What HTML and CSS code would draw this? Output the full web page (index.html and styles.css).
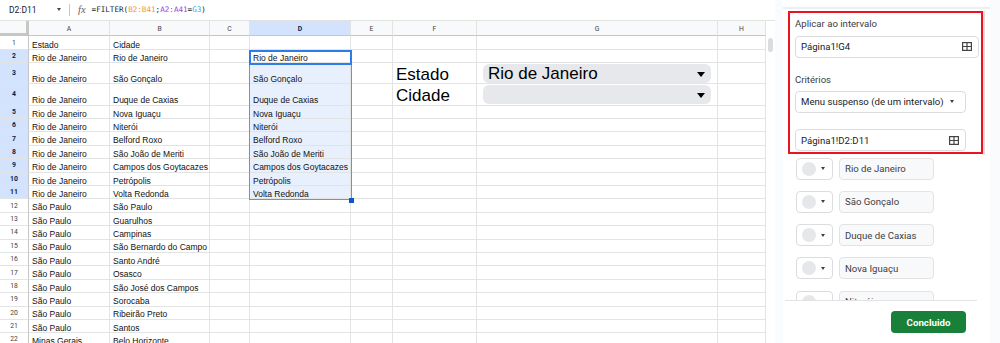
FILE: index.html
```html
<!DOCTYPE html>
<html lang="pt">
<head>
<meta charset="utf-8">
<title>Planilha</title>
<link rel="stylesheet" href="styles.css">
</head>
<body>
<div class="app">
  <div class="sheet">
    <div class="fbar">
      <span class="namebox">D2:D11</span>
      <span class="nb-caret"></span>
      <span class="fsep"></span>
      <span class="fx">fx</span>
      <span class="formula">=FILTER(<span class="r1">B2:B41</span>;<span class="r2">A2:A41</span>=<span class="r3">G3</span>)</span>
    </div>
    <div class="gridarea">
      <div class="grid">
        <div class="row hdr"><div class="corner"></div><div class="h">A</div><div class="h">B</div><div class="h">C</div><div class="h sel">D</div><div class="h">E</div><div class="h">F</div><div class="h">G</div><div class="h">H</div></div>
        <div class="row h14"><div class="rn">1</div><div class="c">Estado</div><div class="c">Cidade</div><div class="c"></div><div class="c"></div><div class="c"></div><div class="c"></div><div class="c"></div><div class="c"></div></div>
        <div class="row h13"><div class="rn sel">2</div><div class="c">Rio de Janeiro</div><div class="c">Rio de Janeiro</div><div class="c"></div><div class="c">Rio de Janeiro</div><div class="c"></div><div class="c"></div><div class="c"></div><div class="c"></div></div>
        <div class="row h21"><div class="rn sel">3</div><div class="c">Rio de Janeiro</div><div class="c">São Gonçalo</div><div class="c"></div><div class="c rg">São Gonçalo</div><div class="c"></div><div class="c big">Estado</div><div class="c gcell"><div class="chip"><span>Rio de Janeiro</span><span class="tri"></span></div></div><div class="c"></div></div>
        <div class="row h21b"><div class="rn sel">4</div><div class="c">Rio de Janeiro</div><div class="c">Duque de Caxias</div><div class="c"></div><div class="c rg">Duque de Caxias</div><div class="c"></div><div class="c big">Cidade</div><div class="c gcell"><div class="chip"><span></span><span class="tri"></span></div></div><div class="c"></div></div>
        <div class="row"><div class="rn sel">5</div><div class="c">Rio de Janeiro</div><div class="c">Nova Iguaçu</div><div class="c"></div><div class="c rg">Nova Iguaçu</div><div class="c"></div><div class="c"></div><div class="c"></div><div class="c"></div></div>
        <div class="row"><div class="rn sel">6</div><div class="c">Rio de Janeiro</div><div class="c">Niterói</div><div class="c"></div><div class="c rg">Niterói</div><div class="c"></div><div class="c"></div><div class="c"></div><div class="c"></div></div>
        <div class="row"><div class="rn sel">7</div><div class="c">Rio de Janeiro</div><div class="c">Belford Roxo</div><div class="c"></div><div class="c rg">Belford Roxo</div><div class="c"></div><div class="c"></div><div class="c"></div><div class="c"></div></div>
        <div class="row"><div class="rn sel">8</div><div class="c">Rio de Janeiro</div><div class="c">São João de Meriti</div><div class="c"></div><div class="c rg">São João de Meriti</div><div class="c"></div><div class="c"></div><div class="c"></div><div class="c"></div></div>
        <div class="row"><div class="rn sel">9</div><div class="c">Rio de Janeiro</div><div class="c">Campos dos Goytacazes</div><div class="c"></div><div class="c rg">Campos dos Goytacazes</div><div class="c"></div><div class="c"></div><div class="c"></div><div class="c"></div></div>
        <div class="row"><div class="rn sel">10</div><div class="c">Rio de Janeiro</div><div class="c">Petrópolis</div><div class="c"></div><div class="c rg">Petrópolis</div><div class="c"></div><div class="c"></div><div class="c"></div><div class="c"></div></div>
        <div class="row"><div class="rn sel">11</div><div class="c">Rio de Janeiro</div><div class="c">Volta Redonda</div><div class="c"></div><div class="c rg">Volta Redonda</div><div class="c"></div><div class="c"></div><div class="c"></div><div class="c"></div></div>
        <div class="row"><div class="rn">12</div><div class="c">São Paulo</div><div class="c">São Paulo</div><div class="c"></div><div class="c"></div><div class="c"></div><div class="c"></div><div class="c"></div><div class="c"></div></div>
        <div class="row"><div class="rn">13</div><div class="c">São Paulo</div><div class="c">Guarulhos</div><div class="c"></div><div class="c"></div><div class="c"></div><div class="c"></div><div class="c"></div><div class="c"></div></div>
        <div class="row"><div class="rn">14</div><div class="c">São Paulo</div><div class="c">Campinas</div><div class="c"></div><div class="c"></div><div class="c"></div><div class="c"></div><div class="c"></div><div class="c"></div></div>
        <div class="row"><div class="rn">15</div><div class="c">São Paulo</div><div class="c">São Bernardo do Campo</div><div class="c"></div><div class="c"></div><div class="c"></div><div class="c"></div><div class="c"></div><div class="c"></div></div>
        <div class="row"><div class="rn">16</div><div class="c">São Paulo</div><div class="c">Santo André</div><div class="c"></div><div class="c"></div><div class="c"></div><div class="c"></div><div class="c"></div><div class="c"></div></div>
        <div class="row"><div class="rn">17</div><div class="c">São Paulo</div><div class="c">Osasco</div><div class="c"></div><div class="c"></div><div class="c"></div><div class="c"></div><div class="c"></div><div class="c"></div></div>
        <div class="row"><div class="rn">18</div><div class="c">São Paulo</div><div class="c">São José dos Campos</div><div class="c"></div><div class="c"></div><div class="c"></div><div class="c"></div><div class="c"></div><div class="c"></div></div>
        <div class="row"><div class="rn">19</div><div class="c">São Paulo</div><div class="c">Sorocaba</div><div class="c"></div><div class="c"></div><div class="c"></div><div class="c"></div><div class="c"></div><div class="c"></div></div>
        <div class="row"><div class="rn">20</div><div class="c">São Paulo</div><div class="c">Ribeirão Preto</div><div class="c"></div><div class="c"></div><div class="c"></div><div class="c"></div><div class="c"></div><div class="c"></div></div>
        <div class="row"><div class="rn">21</div><div class="c">São Paulo</div><div class="c">Santos</div><div class="c"></div><div class="c"></div><div class="c"></div><div class="c"></div><div class="c"></div><div class="c"></div></div>
        <div class="row"><div class="rn">22</div><div class="c">Minas Gerais</div><div class="c">Belo Horizonte</div><div class="c"></div><div class="c"></div><div class="c"></div><div class="c"></div><div class="c"></div><div class="c"></div></div>
        <div class="range"></div>
        <div class="active"></div>
        <div class="handle"></div>
      </div>
      <div class="vscroll"><div class="thumb"></div></div>
    </div>
  </div>

  <div class="side">
    <div class="card">
      <div class="card-top"></div>
      <div class="card-body">
        <div class="content">
          <div class="redbox">
            <div class="lbl">Aplicar ao intervalo</div>
            <div class="field f1"><span>Página1!G4</span>
              <svg class="gridicon" width="10" height="9" viewBox="0 0 10 9"><rect x="0.6" y="0.6" width="8.8" height="7.8" fill="none" stroke="#444" stroke-width="1.2"/><path d="M0.6 4.5H9.4M5 0.6V8.4" stroke="#444" stroke-width="1.2" fill="none"/></svg>
            </div>
            <div class="lbl lbl2">Critérios</div>
            <div class="field fsel"><span>Menu suspenso (de um intervalo)</span><span class="caret"></span></div>
            <div class="field f3"><span>Página1!D2:D11</span>
              <svg class="gridicon" width="10" height="9" viewBox="0 0 10 9"><rect x="0.6" y="0.6" width="8.8" height="7.8" fill="none" stroke="#444" stroke-width="1.2"/><path d="M0.6 4.5H9.4M5 0.6V8.4" stroke="#444" stroke-width="1.2" fill="none"/></svg>
            </div>
          </div>
          <div class="items">
            <div class="item"><div class="colorbtn"><span class="dot"></span><span class="caret"></span></div><div class="txt">Rio de Janeiro</div></div>
            <div class="item"><div class="colorbtn"><span class="dot"></span><span class="caret"></span></div><div class="txt">São Gonçalo</div></div>
            <div class="item"><div class="colorbtn"><span class="dot"></span><span class="caret"></span></div><div class="txt">Duque de Caxias</div></div>
            <div class="item"><div class="colorbtn"><span class="dot"></span><span class="caret"></span></div><div class="txt">Nova Iguaçu</div></div>
            <div class="item"><div class="colorbtn"><span class="dot"></span><span class="caret"></span></div><div class="txt">Niterói</div></div>
          </div>
        </div>
        <div class="pscroll"><div class="pthumb"></div></div>
      </div>
      <div class="foot"><div class="done">Concluido</div></div>
    </div>
  </div>
</div>
</body>
</html>
```

FILE: styles.css
```css
* { box-sizing: border-box; }
html, body { margin: 0; padding: 0; }
body {
  width: 1000px;
  height: 343px;
  overflow: hidden;
  background: #fff;
  font-family: "Liberation Sans", Arial, sans-serif;
}
.app { display: flex; height: 343px; }

/* ---------- sheet ---------- */
.sheet { width: 775px; flex: none; display: flex; flex-direction: column; }
.fbar {
  height: 21px;
  flex: none;
  border-bottom: 1px solid #e1e3e1;
  display: flex;
  align-items: center;
  font-family: Roboto, "Liberation Sans", sans-serif;
  color: #202124;
  padding-bottom: 1px;
}
.namebox { font-size: 8.5px; margin-left: 9px; width: 48px; }
.nb-caret {
  width: 0; height: 0;
  border-left: 2.5px solid transparent;
  border-right: 2.5px solid transparent;
  border-top: 3px solid #444;
}
.fsep { width: 1px; height: 12px; background: #c7c7c7; margin-left: 8px; }
.fx {
  font-family: "Liberation Serif", serif;
  font-style: italic;
  font-size: 10.5px;
  color: #5f6368;
  margin-left: 8px;
}
.formula {
  font-family: "DejaVu Sans Mono", "Liberation Mono", monospace;
  font-size: 7.6px;
  margin-left: 6px;
  color: #202124;
}
.r1 { color: #f09a2a; }
.r2 { color: #a244dc; }
.r3 { color: #34ace0; }

.gridarea { flex: 1; display: flex; overflow: hidden; min-height: 0; }
.grid { width: 766px; flex: none; position: relative; }
.row {
  display: grid;
  grid-template-columns: 29px 81px 100px 40px 101px 42px 84px 241px 48px;
  height: 13.4px;
}
.row > div { border-right: 1px solid #e2e3e3; border-bottom: 1px solid #e2e3e3; }
.row.hdr { height: 15px; background: #f8f9fa; }
.row.h14 { height: 14px; }
.row.h13 { height: 13.33px; }
.row.h21 { height: 21px; }
.row.h21b { height: 21.33px; }

.hdr > div { border-bottom-color: #c4c7c5; }
.corner { border-right: 3px solid #c4c7c5 !important; border-bottom: 3px solid #c4c7c5 !important; }
.h {
  display: flex; align-items: center; justify-content: center;
  font-family: Roboto, sans-serif; font-size: 6.8px; color: #444;
  padding-top: 1px;
}
.h.sel { background: #d3e3fd; font-weight: 700; color: #041e49; }

.rn {
  display: flex; align-items: center; justify-content: center;
  font-family: Roboto, sans-serif; font-size: 6.8px; color: #444;
  background: #fff;
  border-right-color: #c4c7c5 !important;
}
.rn.sel { background: #d3e3fd; font-weight: 700; color: #041e49; }

.c {
  display: flex;
  align-items: flex-end;
  padding: 0 3px 0;
  font-size: 8.5px;
  line-height: 8.5px;
  white-space: nowrap;
  color: #111;
}
.c.rg { background: #e8f0fe; }
.c.big { font-size: 17px; line-height: 17px; padding-bottom: 0.8px; color: #000; }
.c.gcell { padding: 0.7px 6px 0.3px; align-items: stretch; }
.chip {
  flex: 1;
  background: #e6e8eb;
  border-radius: 6px;
  display: flex;
  align-items: center;
  justify-content: space-between;
  padding: 0 6px 0 5px;
  font-size: 17px;
  line-height: 19px;
  color: #000;
}
.tri {
  width: 0; height: 0;
  border-left: 4.5px solid transparent;
  border-right: 4.5px solid transparent;
  border-top: 5px solid #000;
  margin-top: 1px;
}

.range {
  position: absolute;
  left: 249px; top: 28.5px;
  width: 103px; height: 150.5px;
  border: 1.5px solid #5c95f1;
  pointer-events: none;
}
.active {
  position: absolute;
  left: 249px; top: 28.5px;
  width: 103px; height: 15px;
  border: 2px solid #2f7be9;
}
.handle {
  position: absolute;
  left: 349px; top: 176.5px;
  width: 5px; height: 5px;
  background: #0b57d0;
}
.vscroll { width: 9px; flex: none; background: #fff; padding: 17px 0 0 2px; }
.thumb { width: 5px; height: 14px; background: #dadce0; border-radius: 3px; }

/* ---------- side panel ---------- */
.side { flex: 1; background: #f9fbfd; padding: 0 10px 0 8px; font-family: Roboto, "Liberation Sans", sans-serif; }
.card { height: 343px; background: #fff; display: flex; flex-direction: column; }
.card-top { height: 9px; flex: none; border-bottom: 2px solid #eceef1; }
.card-body { flex: 1; display: flex; overflow: hidden; min-height: 0; }
.content { flex: 1; padding-top: 1.7px; }
.pscroll { width: 7px; flex: none; padding-top: 2px; }
.pthumb { width: 2px; height: 144px; background: #dadce0; }

.redbox {
  margin-left: 5px;
  width: 195px;
  border: 2px solid #e8141f;
  padding: 5.3px 2px 1px 5px;
}
.lbl { font-size: 9.6px; line-height: 12px; color: #3c4043; }
.lbl2 { margin-top: 16px; }
.field {
  height: 22.3px;
  border: 1px solid #dadce0;
  border-radius: 4px;
  display: flex;
  align-items: center;
  justify-content: space-between;
  padding: 0 6px 0 5px;
  font-size: 9.6px;
  color: #202124;
}
.f1 { margin-top: 5.7px; width: 184px; }
.fsel { margin-top: 4.7px; width: 171px; padding-right: 11px; }
.f3 { margin-top: 16px; width: 171px; }
.gridicon { display: block; }
.caret {
  width: 0; height: 0;
  border-left: 2.5px solid transparent;
  border-right: 2.5px solid transparent;
  border-top: 3px solid #3c4043;
}

.items { margin-top: 3.3px; padding-left: 13px; display: flex; flex-direction: column; gap: 11.3px; }
.item { display: flex; gap: 6px; height: 22px; flex: none; }
.colorbtn {
  width: 37px;
  border: 1px solid #dadce0;
  border-radius: 4px;
  display: flex;
  align-items: center;
  padding-left: 4.7px;
  gap: 5.8px;
}
.dot { width: 14px; height: 14px; border-radius: 50%; background: #e6e7ea; }
.txt {
  width: 95px;
  background: #f8f9fa;
  border: 1px solid #e3e3e3;
  border-radius: 4px;
  padding-left: 5px;
  display: flex;
  align-items: center;
  font-size: 9.6px;
  color: #3c4043;
}

.foot {
  height: 43px;
  flex: none;
  border-top: 1px solid #e3e3e3;
  margin: 0 13px 0 2px;
  display: flex;
  justify-content: flex-end;
  align-items: flex-start;
  padding-top: 10px;
}
.done {
  width: 75px;
  height: 22.3px;
  margin-right: 11px;
  background: #188038;
  color: #fff;
  border-radius: 4px;
  display: flex;
  align-items: center;
  justify-content: center;
  font-size: 9.7px;
  font-weight: 700;
}
```
